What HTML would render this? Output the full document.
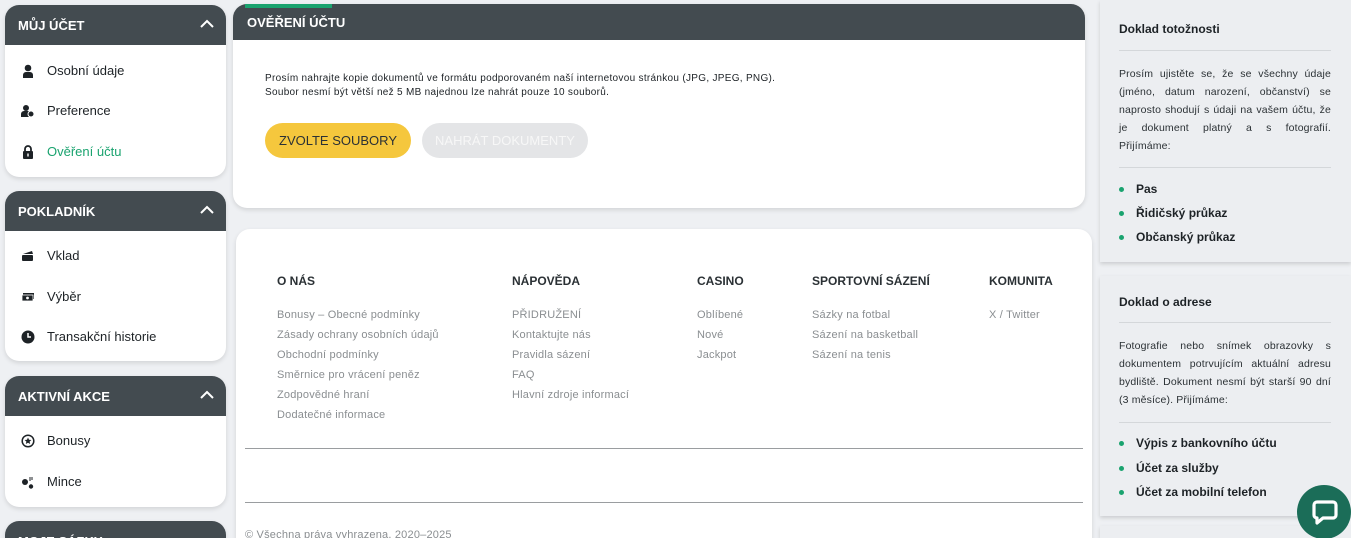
<!DOCTYPE html>
<html><head><meta charset="utf-8"><style>
*{margin:0;padding:0;box-sizing:border-box}
html,body{width:1351px;height:538px;overflow:hidden}
body{background:#eef0f3;font-family:"Liberation Sans",sans-serif;position:relative;color:#1d2226}
.a{position:absolute}
.card{position:absolute;background:#fff;border-radius:14px;overflow:hidden;box-shadow:0 2px 5px rgba(0,0,0,.12)}
.hd{height:40px;background:#434b50;color:#fff;font-weight:bold;font-size:13px;padding:13px 0 0 13px;position:relative}
.hd svg{position:absolute;right:12px;top:14px}
.it{position:absolute;left:42px;font-size:13px;color:#1d2226}
.ic{position:absolute;left:16px;width:14px;height:14px}
.ft{position:absolute;font-size:11px;color:#8a8e91;letter-spacing:.2px}
.fh{position:absolute;font-size:12px;font-weight:bold;color:#2b3135}
.rp{position:absolute;left:1100px;width:251px;background:#eceef1;box-shadow:0 2px 4px rgba(0,0,0,.15)}
.rp h3{position:absolute;left:19px;font-size:12px;font-weight:bold;color:#1d2226}
.rp p{position:absolute;left:19px;width:212px;font-size:10.5px;letter-spacing:.15px;line-height:18px;text-align:justify;color:#2b3135}
.rp hr{position:absolute;left:19px;width:212px;border:0;border-top:1px solid #d4d7da}
.li{position:absolute;left:36px;font-size:12px;font-weight:bold}
.li:before{content:"";position:absolute;left:-17px;top:5px;width:5px;height:5px;border-radius:50%;background:#1aa36f}
</style></head><body>
<div class="card" style="left:5px;top:5px;width:221px;height:172px">
<div class="hd">MŮJ ÚČET<svg width="14" height="9"><path d="M1 8L7 2L13 8" stroke="#fff" stroke-width="2" fill="none"/></svg></div>
<svg class="ic" style="top:59px" viewBox="0 0 14 14"><circle cx="7" cy="4" r="3.3" fill="#1d2226"/><path d="M2 14V11a3 3 0 0 1 3-3h4a3 3 0 0 1 3 3v3z" fill="#1d2226"/></svg><div class="it" style="top:58px">Osobní údaje</div>
<svg class="ic" style="top:99px" viewBox="0 0 14 14"><circle cx="5" cy="4" r="3" fill="#1d2226"/><path d="M0 13V10a3 3 0 0 1 3-3h4a3 3 0 0 1 3 3v3z" fill="#1d2226"/><circle cx="10" cy="10" r="3" fill="#1d2226" stroke="#fff"/></svg><div class="it" style="top:98px">Preference</div>
<svg class="ic" style="top:140px" viewBox="0 0 14 14"><path d="M4 6V4a3 3 0 0 1 6 0v2" stroke="#1d2226" stroke-width="1.8" fill="none"/><rect x="2" y="6" width="10" height="8" rx="1" fill="#1d2226"/><rect x="6.3" y="8.5" width="1.4" height="3" fill="#fff"/></svg><div class="it" style="top:139px;color:#1aa36f">Ověření účtu</div>
</div>
<div class="card" style="left:5px;top:191px;width:221px;height:170px">
<div class="hd">POKLADNÍK<svg width="14" height="9"><path d="M1 8L7 2L13 8" stroke="#fff" stroke-width="2" fill="none"/></svg></div>
<svg class="ic" style="top:58px" viewBox="0 0 14 14"><path d="M2 5l9-3 1 3z" fill="#1d2226"/><rect x="1" y="6" width="11" height="6" rx="1" fill="#1d2226"/></svg><div class="it" style="top:57px">Vklad</div>
<svg class="ic" style="top:99px" viewBox="0 0 14 14"><rect x="2" y="3" width="11" height="6" fill="#1d2226"/><rect x="1" y="5" width="11" height="6" fill="#1d2226" stroke="#fff" stroke-width=".8"/><circle cx="6.5" cy="8" r="1.4" fill="#fff"/></svg><div class="it" style="top:98px">Výběr</div>
<svg class="ic" style="top:139px" viewBox="0 0 14 14"><circle cx="7" cy="7" r="6.5" fill="#1d2226"/><path d="M7 3v4h3" stroke="#fff" stroke-width="1.5" fill="none"/></svg><div class="it" style="top:138px">Transakční historie</div>
</div>
<div class="card" style="left:5px;top:376px;width:221px;height:131px">
<div class="hd">AKTIVNÍ AKCE<svg width="14" height="9"><path d="M1 8L7 2L13 8" stroke="#fff" stroke-width="2" fill="none"/></svg></div>
<svg class="ic" style="top:58px" viewBox="0 0 14 14"><circle cx="7" cy="7" r="5.8" stroke="#1d2226" stroke-width="1.5" fill="none"/><path d="M7 3.5l1 2.3 2.4.2-1.8 1.6.6 2.4L7 8.7 4.8 10l.6-2.4L3.6 6l2.4-.2z" fill="#1d2226"/></svg><div class="it" style="top:57px">Bonusy</div>
<svg class="ic" style="top:99px" viewBox="0 0 14 14"><circle cx="4" cy="7" r="3" fill="#1d2226"/><circle cx="10" cy="11.5" r="2.2" fill="#1d2226"/><path d="M9 2v4M11 2v3" stroke="#1d2226" stroke-width="1"/></svg><div class="it" style="top:98px">Mince</div>
</div>
<div class="card" style="left:5px;top:521px;width:221px;height:17px;border-radius:14px 14px 0 0"><div class="hd">MOJE SÁZKY</div></div>
<div class="card" style="left:233px;top:4px;width:852px;height:204px">
<div class="hd" style="height:36px;padding:11px 0 0 14px">OVĚŘENÍ ÚČTU</div>
<div class="a" style="left:12px;top:0;width:87px;height:4px;background:#1aa36f"></div>
<div class="a" style="left:32px;top:68px;font-size:10px;letter-spacing:.3px;line-height:14px;color:#1d2226">Prosím nahrajte kopie dokumentů ve formátu podporovaném naší internetovou stránkou (JPG, JPEG, PNG).<br>Soubor nesmí být větší než 5 MB najednou lze nahrát pouze 10 souborů.</div>
<div class="a" style="left:32px;top:119px;width:146px;height:35px;border-radius:18px;background:#f5c73d;font-size:13px;color:#2b3135;text-align:center;line-height:35px">ZVOLTE SOUBORY</div>
<div class="a" style="left:189px;top:119px;width:166px;height:35px;border-radius:18px;background:#e4e5e7;font-size:13px;color:#f7f7f7;text-align:center;line-height:35px">NAHRÁT DOKUMENTY</div>
</div>
<div class="card" style="left:236px;top:229px;width:856px;height:320px;border-radius:14px 14px 0 0">
<div class="fh" style="left:41px;top:45px">O NÁS</div>
<div class="fh" style="left:276px;top:45px">NÁPOVĚDA</div>
<div class="fh" style="left:461px;top:45px">CASINO</div>
<div class="fh" style="left:576px;top:45px">SPORTOVNÍ SÁZENÍ</div>
<div class="fh" style="left:753px;top:45px">KOMUNITA</div>
<div class="ft" style="left:41px;top:76px;line-height:20px">Bonusy – Obecné podmínky<br>Zásady ochrany osobních údajů<br>Obchodní podmínky<br>Směrnice pro vrácení peněz<br>Zodpovědné hraní<br>Dodatečné informace</div>
<div class="ft" style="left:276px;top:76px;line-height:20px">PŘIDRUŽENÍ<br>Kontaktujte nás<br>Pravidla sázení<br>FAQ<br>Hlavní zdroje informací</div>
<div class="ft" style="left:461px;top:76px;line-height:20px">Oblíbené<br>Nové<br>Jackpot</div>
<div class="ft" style="left:576px;top:76px;line-height:20px">Sázky na fotbal<br>Sázení na basketball<br>Sázení na tenis</div>
<div class="ft" style="left:753px;top:76px;line-height:20px">X / Twitter</div>
<div class="a" style="left:9px;top:219px;width:838px;border-top:1px solid #9a9da0"></div>
<div class="a" style="left:9px;top:273px;width:838px;border-top:1px solid #9a9da0"></div>
<div class="ft" style="left:9px;top:300px">© Všechna práva vyhrazena. 2020–2025</div>
</div>
<div class="rp" style="top:0;height:262px">
<h3 style="top:22px">Doklad totožnosti</h3><hr style="top:50px">
<p style="top:65px;text-align-last:justify">Prosím ujistěte se, že se všechny údaje (jméno, datum narození, občanství) se naprosto shodují s údaji na vašem účtu, že je dokument platný a s fotografií.</p>
<p style="top:137px">Přijímáme:</p>
<hr style="top:167px">
<div class="li" style="top:182px">Pas</div><div class="li" style="top:206px">Řidičský průkaz</div><div class="li" style="top:230px">Občanský průkaz</div>
</div>
<div class="rp" style="top:276px;height:240px">
<h3 style="top:19px">Doklad o adrese</h3><hr style="top:46px">
<p style="top:61px">Fotografie nebo snímek obrazovky s dokumentem potrvujícím aktuální adresu bydliště. Dokument nesmí být starší 90 dní (3 měsíce). Přijímáme:</p>
<hr style="top:146px">
<div class="li" style="top:160px">Výpis z bankovního účtu</div><div class="li" style="top:185px">Účet za služby</div><div class="li" style="top:209px">Účet za mobilní telefon</div>
</div>
<div class="rp" style="top:526px;height:12px"></div>
<div class="a" style="left:1297px;top:485px;width:54px;height:54px;border-radius:50%;background:#1b6d58"></div>
<svg class="a" style="left:1311px;top:498px" width="28" height="28" viewBox="0 0 28 28"><path d="M6 4h16a3 3 0 0 1 3 3v10a3 3 0 0 1-3 3H12l-6 5v-5a3 3 0 0 1-3-3V7a3 3 0 0 1 3-3z" fill="none" stroke="#fff" stroke-width="3.2" stroke-linejoin="round"/></svg>
</body></html>
